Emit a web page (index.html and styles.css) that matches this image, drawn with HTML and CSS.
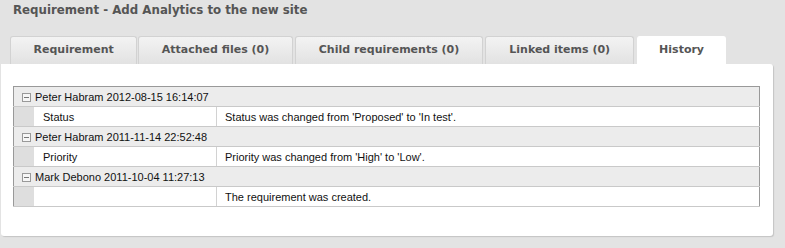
FILE: index.html
```html
<html>
<head>
    <link rel="stylesheet" href="styles.css">
</head>
<body>

<h2 class="title">Requirement - Add Analytics to the new site</h2>

<ul class="tabs">
    <li>Requirement</li>
    <li>Attached files (0)</li>
    <li class="wide">Child requirements (0)</li>
    <li class="wide">Linked items (0)</li>
    <li class="active">History</li>
</ul>

<div class="panel">
<table class="history">
    <tr class="group">
        <td colspan="3"><span class="toggle"></span>Peter Habram 2012-08-15 16:14:07</td>
    </tr>
    <tr class="item">
        <td class="indent"></td>
        <td class="field">Status</td>
        <td>Status was changed from 'Proposed' to 'In test'.</td>
    </tr>
    <tr class="group">
        <td colspan="3"><span class="toggle"></span>Peter Habram 2011-11-14 22:52:48</td>
    </tr>
    <tr class="item">
        <td class="indent"></td>
        <td class="field">Priority</td>
        <td>Priority was changed from 'High' to 'Low'.</td>
    </tr>
    <tr class="group">
        <td colspan="3"><span class="toggle"></span>Mark Debono 2011-10-04 11:27:13</td>
    </tr>
    <tr class="item">
        <td class="indent"></td>
        <td class="field"></td>
        <td>The requirement was created.</td>
    </tr>
</table>
</div>

</body>
</html>
```

FILE: styles.css
```css
body {
    margin: 0;
    background-color: #e3e3e3;
    font-family: "DejaVu Sans", sans-serif;
}

.title {
    font-size: 11.8px;
    font-weight: bold;
    color: #555;
    margin: 0;
    padding: 3px 0 0 13px;
    height: 33px;
    line-height: 14px;
}

.tabs {
    list-style: none;
    margin: 0 0 0 10px;
    padding: 0;
    display: flex;
    gap: 1px;
    height: 28px;
}

.tabs li {
    font-size: 11px;
    font-weight: bold;
    color: #555;
    line-height: 26px;
    padding: 0 22.5px;
    border: 1px solid #d2d2d2;
    border-bottom: none;
    border-radius: 3px 3px 0 0;
    background: linear-gradient(#f3f3f3, #e2e2e2);
}

.tabs li.wide {
    padding: 0 23px;
    margin-left: 1px;
}

.tabs li.active {
    background: #fff;
    border-color: #fff;
    margin-left: 2px;
    padding: 0 21px;
}

.panel {
    margin-left: 1px;
    width: 772px;
    height: 172px;
    background-color: #fff;
    border-radius: 0 3px 3px 3px;
    box-shadow: 1px 1px 1px #c4c4c4;
    padding-top: 22px;
    box-sizing: border-box;
}

.history {
    margin-left: 12px;
    width: 747px;
    border-collapse: collapse;
    border: 1px solid #999;
    font-family: "Liberation Sans", sans-serif;
    font-size: 11px;
    color: #111;
}

.history td {
    height: 20px;
    padding: 0;
    border-bottom: 1px solid #c9c9c9;
}

.group td {
    background-color: #ececec;
    padding-left: 8px;
}

.toggle {
    display: inline-block;
    width: 7px;
    height: 7px;
    border: 1px solid #999;
    background: linear-gradient(#777, #777) center / 5px 1px no-repeat #f6f6f6;
    margin-right: 4px;
    vertical-align: -1px;
}

.indent {
    width: 20px;
    background-color: #dedede;
}

.field {
    width: 173px;
    padding-left: 9px !important;
    border-right: 1px solid #d2d2d2;
}

.item td:last-child {
    padding-left: 8px;
}
```
